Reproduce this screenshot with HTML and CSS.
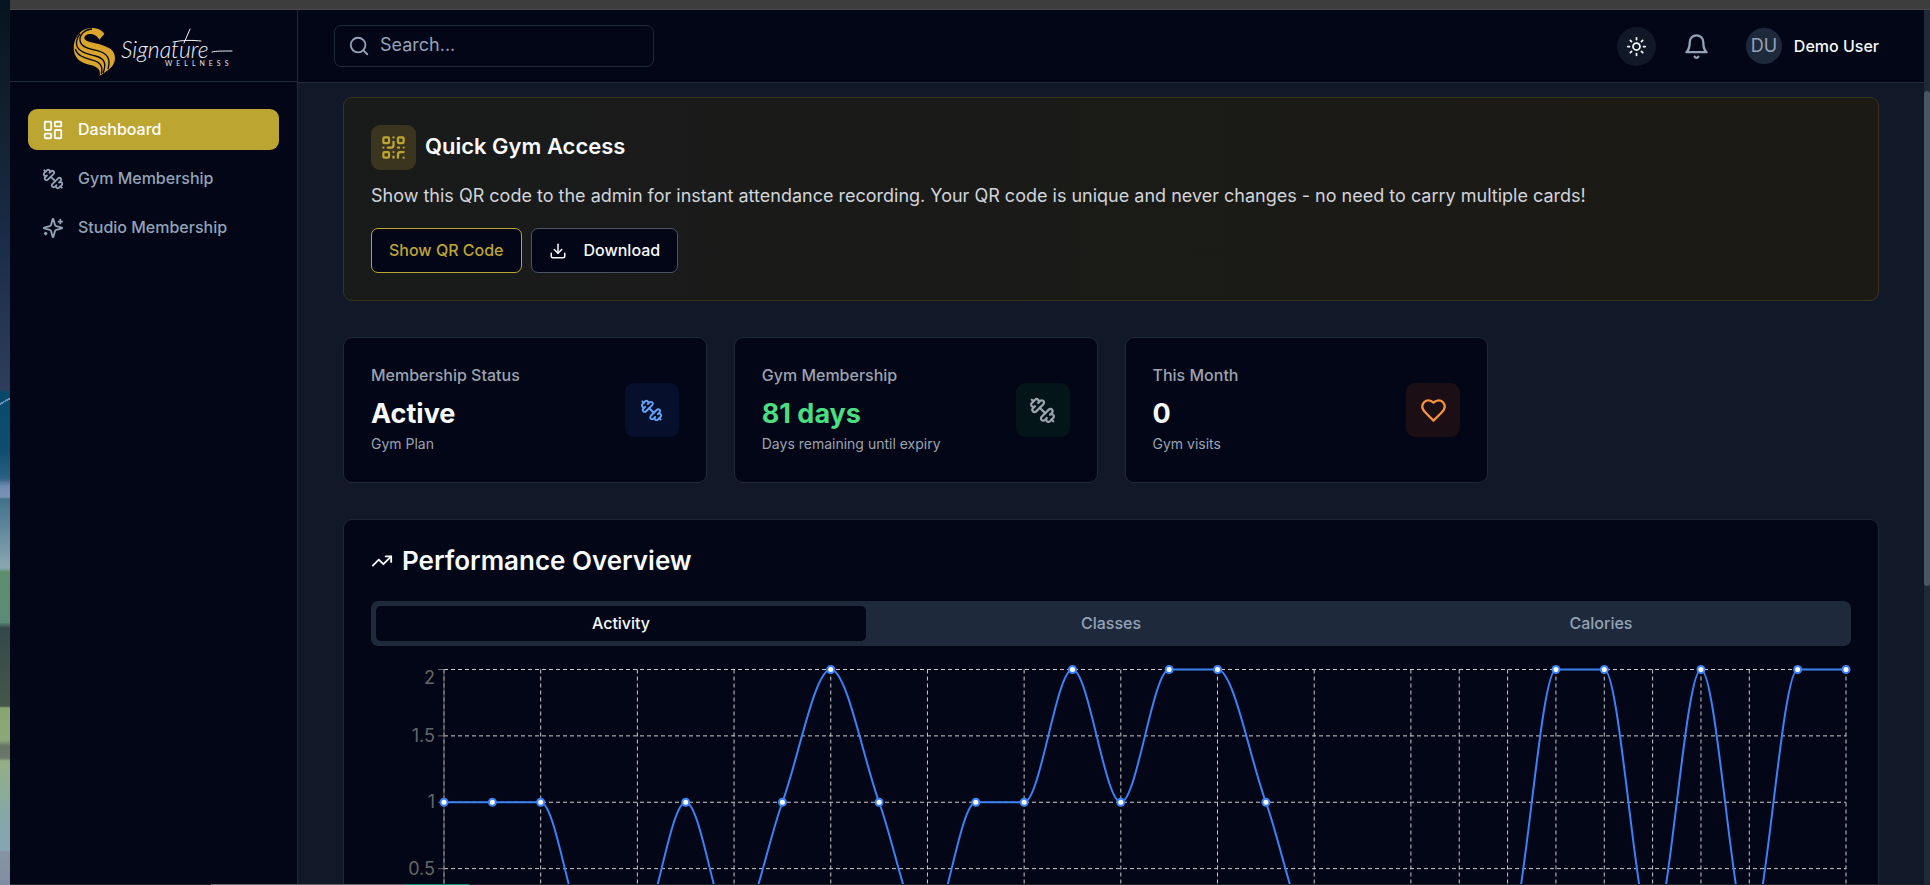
FILE: index.html
```html
<!DOCTYPE html>
<html lang="en">
<head>
<meta charset="utf-8">
<meta name="viewport" content="width=device-width, initial-scale=1">
<title>Signature Wellness - Dashboard</title>
<link rel="stylesheet" href="styles.css">
</head>
<body>
<svg class="sprite" aria-hidden="true">
  <symbol id="i-dumbbell" viewBox="0 0 24 24"><path d="M14.4 14.4 9.6 9.6"/><path d="M18.657 21.485a2 2 0 1 1-2.829-2.828l-1.767 1.768a2 2 0 1 1-2.829-2.829l6.364-6.364a2 2 0 1 1 2.829 2.829l-1.768 1.767a2 2 0 1 1 2.828 2.829z"/><path d="m21.5 21.5-1.4-1.4"/><path d="M3.9 3.9 2.5 2.5"/><path d="M6.404 12.768a2 2 0 1 1-2.829-2.829l1.768-1.767a2 2 0 1 1-2.828-2.829l2.828-2.828a2 2 0 1 1 2.829 2.828l1.767-1.768a2 2 0 1 1 2.829 2.829z"/></symbol>
</svg>
<div class="desktop">
  <div class="window-edge"></div>
  <div class="wallpaper"></div>
  <div class="app">
    <aside class="sidebar">
      <div class="brand">
        <svg class="logo" viewBox="0 0 162 50" role="img" aria-label="Signature Wellness">
          <g transform="translate(-73 -28) scale(.33333)">
            <path fill="#daa52c" d="M298 122 L313 105 C303 86 272 82 250 93 C230 104 218 132 222 155 C225 181 246 192 268 197 C292 202 303 212 299 230 C326 215 345 200 345 178 C345 155 330 146 305 138 C284 131 256 130 253 118 C252 104 283 96 298 122Z"/>
            <g fill="none" stroke="#020617" stroke-width="4">
              <path d="M276 90 C252 92 238 108 240 124 C243 146 270 149 292 155 C322 163 333 178 324 210"/>
              <path d="M240 104 C230 118 226 130 232 144 C241 163 268 165 287 171 C312 178 321 192 309 222"/>
              <path d="M226 150 C234 174 260 178 280 184 C302 190 310 202 304 225"/>
            </g>
          </g>
          <text class="logo-name" x="48" y="31">Signature</text>
          <path fill="none" stroke="#f1f2f4" stroke-linecap="round" d="M100 15c10-2 18-2 28-1M117 2l-6 14M139 25c4-1 10-1 20-1"/>
          <text class="logo-sub" x="92" y="39">WELLNESS</text>
        </svg>
      </div>
      <nav class="nav">
        <a class="nav-item active" href="#"><svg class="icon" viewBox="0 0 24 24"><rect width="7" height="9" x="3" y="3" rx="1"/><rect width="7" height="5" x="14" y="3" rx="1"/><rect width="7" height="9" x="14" y="12" rx="1"/><rect width="7" height="5" x="3" y="16" rx="1"/></svg><span>Dashboard</span></a>
        <a class="nav-item" href="#"><svg class="icon"><use href="#i-dumbbell"/></svg><span>Gym Membership</span></a>
        <a class="nav-item" href="#"><svg class="icon" viewBox="0 0 24 24"><path d="M9.937 15.5A2 2 0 0 0 8.5 14.063l-6.135-1.582a.5.5 0 0 1 0-.962L8.5 9.936A2 2 0 0 0 9.937 8.5l1.582-6.135a.5.5 0 0 1 .963 0L14.063 8.5A2 2 0 0 0 15.5 9.937l6.135 1.581a.5.5 0 0 1 0 .964L15.5 14.063a2 2 0 0 0-1.437 1.437l-1.582 6.135a.5.5 0 0 1-.963 0z"/><path d="M20 3v4M22 5h-4M4 17v2M5 18H3"/></svg><span>Studio Membership</span></a>
      </nav>
    </aside>
    <div class="page">
      <header class="topbar">
        <label class="search">
          <svg class="icon" viewBox="0 0 24 24"><circle cx="11" cy="11" r="8"/><path d="m21 21-4.3-4.3"/></svg>
          <input type="search" placeholder="Search..." aria-label="Search">
        </label>
        <div class="actions">
          <button class="theme" type="button" aria-label="Toggle theme"><svg class="icon" viewBox="0 0 24 24"><circle cx="12" cy="12" r="4"/><path d="M12 2v2M12 20v2M4.93 4.93l1.41 1.41M17.66 17.66l1.41 1.41M2 12h2M20 12h2M6.34 17.66l-1.41 1.41M19.07 4.93l-1.41 1.41"/></svg></button>
          <button class="bell" type="button" aria-label="Notifications"><svg class="icon" viewBox="0 0 24 24"><path d="M6 8a6 6 0 0 1 12 0c0 7 3 9 3 9H3s3-2 3-9"/><path d="M10.3 21a1.94 1.94 0 0 0 3.4 0"/></svg></button>
          <button class="user" type="button"><span class="avatar">DU</span>Demo User</button>
        </div>
      </header>
      <main class="content">
        <section class="card access">
          <div class="access-head">
            <span class="access-icon"><svg class="icon" viewBox="0 0 24 24"><rect width="5" height="5" x="3" y="3" rx="1"/><rect width="5" height="5" x="16" y="3" rx="1"/><rect width="5" height="5" x="3" y="16" rx="1"/><path d="M21 16h-3a2 2 0 0 0-2 2v3M21 21v.01M12 7v3a2 2 0 0 1-2 2H7M3 12h.01M12 3h.01M12 16v.01M16 12h1M21 12v.01M12 21v-1"/></svg></span>
            <h2>Quick Gym Access</h2>
          </div>
          <p>Show this QR code to the admin for instant attendance recording. Your QR code is unique and never changes - no need to carry multiple cards!</p>
          <div class="access-buttons">
            <button class="btn btn-gold" type="button"><span>Show QR Code</span></button>
            <button class="btn" type="button"><svg class="icon" viewBox="0 0 24 24"><path d="M21 15v4a2 2 0 0 1-2 2H5a2 2 0 0 1-2-2v-4"/><path d="m7 10 5 5 5-5"/><path d="M12 15V3"/></svg><span>Download</span></button>
          </div>
        </section>
        <section class="stats">
          <article class="card stat">
            <div><h3>Membership Status</h3><strong>Active</strong><small>Gym Plan</small></div>
            <span class="stat-icon blue"><svg class="icon"><use href="#i-dumbbell"/></svg></span>
          </article>
          <article class="card stat">
            <div><h3>Gym Membership</h3><strong class="good">81 days</strong><small>Days remaining until expiry</small></div>
            <span class="stat-icon green"><svg class="icon"><use href="#i-dumbbell"/></svg></span>
          </article>
          <article class="card stat">
            <div><h3>This Month</h3><strong>0</strong><small>Gym visits</small></div>
            <span class="stat-icon orange"><svg class="icon" viewBox="0 0 24 24"><path d="M19 14c1.49-1.46 3-3.21 3-5.5A5.5 5.5 0 0 0 16.5 3c-1.76 0-3 .5-4.5 2-1.5-1.5-2.74-2-4.5-2A5.5 5.5 0 0 0 2 8.5c0 2.3 1.5 4.05 3 5.5l7 7Z"/></svg></span>
          </article>
        </section>
        <section class="card performance">
          <h2><svg class="icon" viewBox="0 0 24 24"><path d="m22 7-8.500 8.500-5-5L2 17"/><path d="M16 7h6v6"/></svg>Performance Overview</h2>
          <div class="tabs" role="tablist">
            <button type="button" role="tab" aria-selected="true">Activity</button>
            <button type="button" role="tab" aria-selected="false">Classes</button>
            <button type="button" role="tab" aria-selected="false">Calories</button>
          </div>
          <svg class="chart" id="chart" role="img" aria-label="Daily activity"></svg>
        </section>
      </main>
    </div>
    <div class="scroll-track"><div class="scroll-thumb"></div></div>
  </div>
  <div class="dock-edge"></div>
</div>
<script src="chart.js"></script>
</body>
</html>
```

FILE: styles.css
```css
* { box-sizing: border-box; }

:root {
  --ink: #020617;
  --line: #1e293b;
  --muted: #94a3b8;
  --gray: #9ca3af;
  --gold: #bda532;
}

body {
  margin: 0;
  background: var(--ink);
  color: #f8fafc;
  font: 16px/24px Inter, "Noto Sans", sans-serif;
}

h2, h3, p { margin: 0; }
button, input { font: inherit; color: inherit; }
button { padding: 0; border: 0; background: none; cursor: pointer; }

.sprite { display: none; }

.icon {
  flex: none;
  width: 22px;
  height: 22px;
  fill: none;
  stroke: currentColor;
  stroke-width: 2;
  stroke-linecap: round;
  stroke-linejoin: round;
}

/* Window frame */
.desktop {
  display: grid;
  grid-template: 10px minmax(0, 1fr) 1px / 10px minmax(0, 1fr);
  height: 100vh;
  overflow: hidden;
}
.window-edge {
  grid-area: 1 / 2;
  background: #3d3d3d;
  border-bottom: 1px solid #484a4c;
}
.wallpaper {
  grid-area: 1 / 1 / 4 / 2;
  background:
    linear-gradient(150deg, transparent 45%, #6c8fc4 45%, #6c8fc4 57%, transparent 57%) 0 396px / 10px 10px no-repeat,
    linear-gradient(180deg,
      #05141f 0, #101f2b 100px, #1a2d4a 250px, #2c3e5c 390px,
      #07496b 392px, #0f4d70 450px, #2a6080 478px, #7089b0 486px, #7a92b5 497px,
      #41728c 499px, #8aa6b2 568px, #5d8d6c 572px, #5b8b78 622px,
      #33484a 628px, #45574a 706px, #88a670 708px, #8da778 740px,
      #677364 746px, #6b7669 758px, #93af84 761px, #84a7aa 820px, #84a5b4 850px,
      #8793a3 852px, #7f8da3 100%);
}
.app {
  grid-area: 2 / 2;
  display: flex;
  min-height: 0;
  background: #111827;
}
.dock-edge {
  grid-area: 3 / 2;
  background: linear-gradient(90deg, #20242b 201px, #6b6468 201px, #6b6468 394px, #0d8f7c 396px, #0d8f7c 459px, #20242b 460px);
}

/* Sidebar */
.sidebar {
  flex: none;
  width: 288px;
  background: var(--ink);
  border-right: 1px solid var(--line);
}
.brand {
  display: flex;
  align-items: flex-end;
  height: 72px;
  padding: 0 0 4px 63px;
  border-bottom: 1px solid var(--line);
}
.logo { width: 162px; height: 50px; }
.logo-name {
  fill: #f1f2f4;
  font: italic 300 23px Lato, sans-serif;
}
.logo-sub {
  fill: #e2e4e8;
  font: 7px Lato, sans-serif;
  letter-spacing: 4px;
}
.nav {
  display: flex;
  flex-direction: column;
  gap: 8px;
  padding: 27px 18px;
}
.nav-item {
  display: flex;
  align-items: center;
  gap: 14px;
  height: 41px;
  padding: 0 14px;
  border-radius: 9px;
  color: var(--muted);
  font-weight: 500;
  text-decoration: none;
}
.nav-item.active { background: var(--gold); color: #fff; }
.nav-item span, .btn span { padding-bottom: 2px; }

/* Top bar */
.page {
  display: flex;
  flex: 1;
  flex-direction: column;
  min-width: 0;
}
.topbar {
  display: flex;
  flex: none;
  justify-content: space-between;
  align-items: center;
  height: 73px;
  padding: 0 45px 0 36px;
  background: var(--ink);
  border-bottom: 1px solid var(--line);
}
.search {
  display: flex;
  align-items: center;
  gap: 10px;
  width: 320px;
  height: 42px;
  padding: 0 13px;
  border: 1px solid var(--line);
  border-radius: 7px;
  color: var(--muted);
}
.search input {
  flex: 1;
  min-width: 0;
  padding: 0 0 2px;
  border: 0;
  outline: 0;
  background: none;
  font-size: 18px;
}
.search input::placeholder { color: var(--muted); opacity: 1; }
.actions { display: flex; align-items: center; gap: 26px; }
.theme {
  display: grid;
  place-items: center;
  width: 39px;
  height: 39px;
  border-radius: 50%;
  background: #111827;
}
.theme .icon { width: 21px; height: 21px; }
.bell { display: grid; padding: 0 1px; color: var(--muted); }
.bell .icon { width: 27px; height: 27px; }
.user {
  display: flex;
  align-items: center;
  gap: 12px;
  padding-left: 9px;
  font-weight: 500;
}
.avatar {
  display: grid;
  place-items: center;
  width: 36px;
  height: 36px;
  border-radius: 50%;
  background: var(--line);
  color: var(--muted);
  font-size: 18px;
  font-weight: 400;
}

/* Content */
.content {
  display: flex;
  flex: 1;
  flex-direction: column;
  gap: 36px;
  min-height: 0;
  padding: 14px 45px 0;
  overflow: hidden;
}
.card {
  flex: none;
  background: var(--ink);
  border: 1px solid var(--line);
  border-radius: 9px;
}
.access {
  padding: 27px;
  background: linear-gradient(90deg, #191b1b, #1c1a14);
  border-color: #3b341c;
}
.access-head { display: flex; align-items: center; gap: 9px; }
.access-head h2 {
  padding-bottom: 4px;
  font-size: 22px;
  line-height: 32px;
  font-weight: 600;
}
.access-icon {
  display: grid;
  place-items: center;
  width: 45px;
  height: 45px;
  border-radius: 9px;
  background: #3b341f;
  color: var(--gold);
}
.access-icon .icon { width: 27px; height: 27px; }
.access p {
  margin: 11px 0 18px;
  color: #d1d5db;
  font-size: 18px;
  line-height: 29px;
}
.access-buttons { display: flex; gap: 9px; }
.btn {
  display: flex;
  align-items: center;
  gap: 17px;
  height: 45px;
  padding: 0 17px;
  border: 1px solid #4b5563;
  border-radius: 7px;
  background: var(--ink);
  font-weight: 500;
}
.btn-gold { border-color: var(--gold); color: var(--gold); }
.btn .icon { width: 18px; height: 18px; }

.stats {
  display: grid;
  flex: none;
  grid-template-columns: repeat(4, 1fr);
  gap: 27px;
}
.stat {
  display: flex;
  justify-content: space-between;
  align-items: center;
  height: 146px;
  padding: 0 27px;
}
.stat h3 { color: var(--gray); font-size: 16px; line-height: 22px; font-weight: 500; }
.stat strong {
  display: block;
  margin-top: 10px;
  font-size: 27px;
  line-height: 36px;
}
.stat small {
  display: block;
  color: var(--gray);
  font-size: 14px;
  line-height: 24px;
}
.stat .good { color: #4ade80; }
.stat-icon {
  display: grid;
  place-items: center;
  width: 54px;
  height: 54px;
  border-radius: 9px;
}
.stat-icon .icon { width: 27px; height: 27px; }
.blue { background: #060f2b; color: #60a5fa; }
.stat-icon.blue .icon { width: 23px; height: 23px; }
.green { background: #04151a; color: var(--gray); }
.orange { background: #1b0e15; color: #fb923c; }

.performance { padding: 27px 27px 0; }
.performance h2 {
  display: flex;
  align-items: center;
  gap: 9px;
  margin-bottom: 27px;
  font-size: 26px;
  line-height: 27px;
  font-weight: 600;
}
.tabs {
  display: grid;
  grid-template-columns: repeat(3, 1fr);
  height: 45px;
  padding: 5px;
  border-radius: 7px;
  background: var(--line);
}
.tabs button {
  padding-bottom: 2px;
  border-radius: 5px;
  color: var(--muted);
  font-weight: 500;
}
.tabs button[aria-selected="true"] { background: var(--ink); color: #f8fafc; }

/* Chart */
.chart {
  display: block;
  width: 100%;
  height: 338px;
  margin-top: 17px;
}
.chart line { stroke: #ccc; }
.chart .grid { stroke-dasharray: 4 3; }
.chart .axis { stroke: #666; }
.chart text { fill: #666; font-size: 18px; text-anchor: end; }
.chart .curve { fill: none; stroke: #3b82f6; stroke-width: 2; }
.chart circle { fill: #fff; stroke: #3b82f6; stroke-width: 2; }

/* Scrollbar */
.scroll-track { flex: none; width: 6px; padding-top: 81px; background: #1f2937; }
.scroll-thumb { height: 495px; border-radius: 3px; background: #4b5563; }
```

FILE: chart.js
```js
const values = [1, 1, 1, 0, 0, 1, 0, 1, 2, 1, 0, 1, 1, 2, 1, 2, 2, 1, 0, 0, 0, 0, 0, 2, 2, 0, 2, 0, 2, 2];
const columns = [0, 2, 4, 6, 8, 10, 12, 14, 16, 18, 20, 21, 22, 23, 24, 25, 26, 27, 29];
const chart = document.getElementById('chart');

function draw() {
  const left = 73, right = chart.clientWidth - 5, top = 6.5, bottom = 272;
  const step = (right - left) / (values.length - 1);
  const unit = (bottom - top) / 2;
  const x = i => left + i * step;
  const y = v => bottom - v * unit;
  let out = '';

  for (const v of [0.5, 1, 1.5, 2]) {
    out += `<line class="grid" x1="${left}" x2="${right}" y1="${y(v)}" y2="${y(v)}"/>`;
    out += `<line class="axis" x1="${left - 6}" x2="${left}" y1="${y(v)}" y2="${y(v)}"/>`;
    out += `<text x="${left - 9}" y="${y(v) + (v === 2 ? 14 : 6)}">${v}</text>`;
  }
  for (const i of columns) {
    out += `<line class="grid" x1="${x(i)}" x2="${x(i)}" y1="${top}" y2="${bottom}"/>`;
  }
  out += `<line class="axis" x1="${left}" x2="${left}" y1="${top}" y2="${bottom}"/>`;

  // Monotone cubic interpolation keeps the flat runs flat.
  const slope = values.map((v, i) => {
    const a = v - values[i - 1], b = values[i + 1] - v;
    return a * b > 0 ? Math.sign(a) * Math.min(Math.abs(a), Math.abs(b)) : 0;
  });
  let d = `M${x(0)},${y(values[0])}`;
  for (let i = 1; i < values.length; i++) {
    d += `C${x(i - 1) + step / 3},${y(values[i - 1] + slope[i - 1] / 3)}`
      + ` ${x(i) - step / 3},${y(values[i] - slope[i] / 3)} ${x(i)},${y(values[i])}`;
  }
  out += `<path class="curve" d="${d}"/>`;
  values.forEach((v, i) => { out += `<circle cx="${x(i)}" cy="${y(v)}" r="3.5"/>`; });
  chart.innerHTML = out;
}

draw();
window.addEventListener('resize', draw);
```
